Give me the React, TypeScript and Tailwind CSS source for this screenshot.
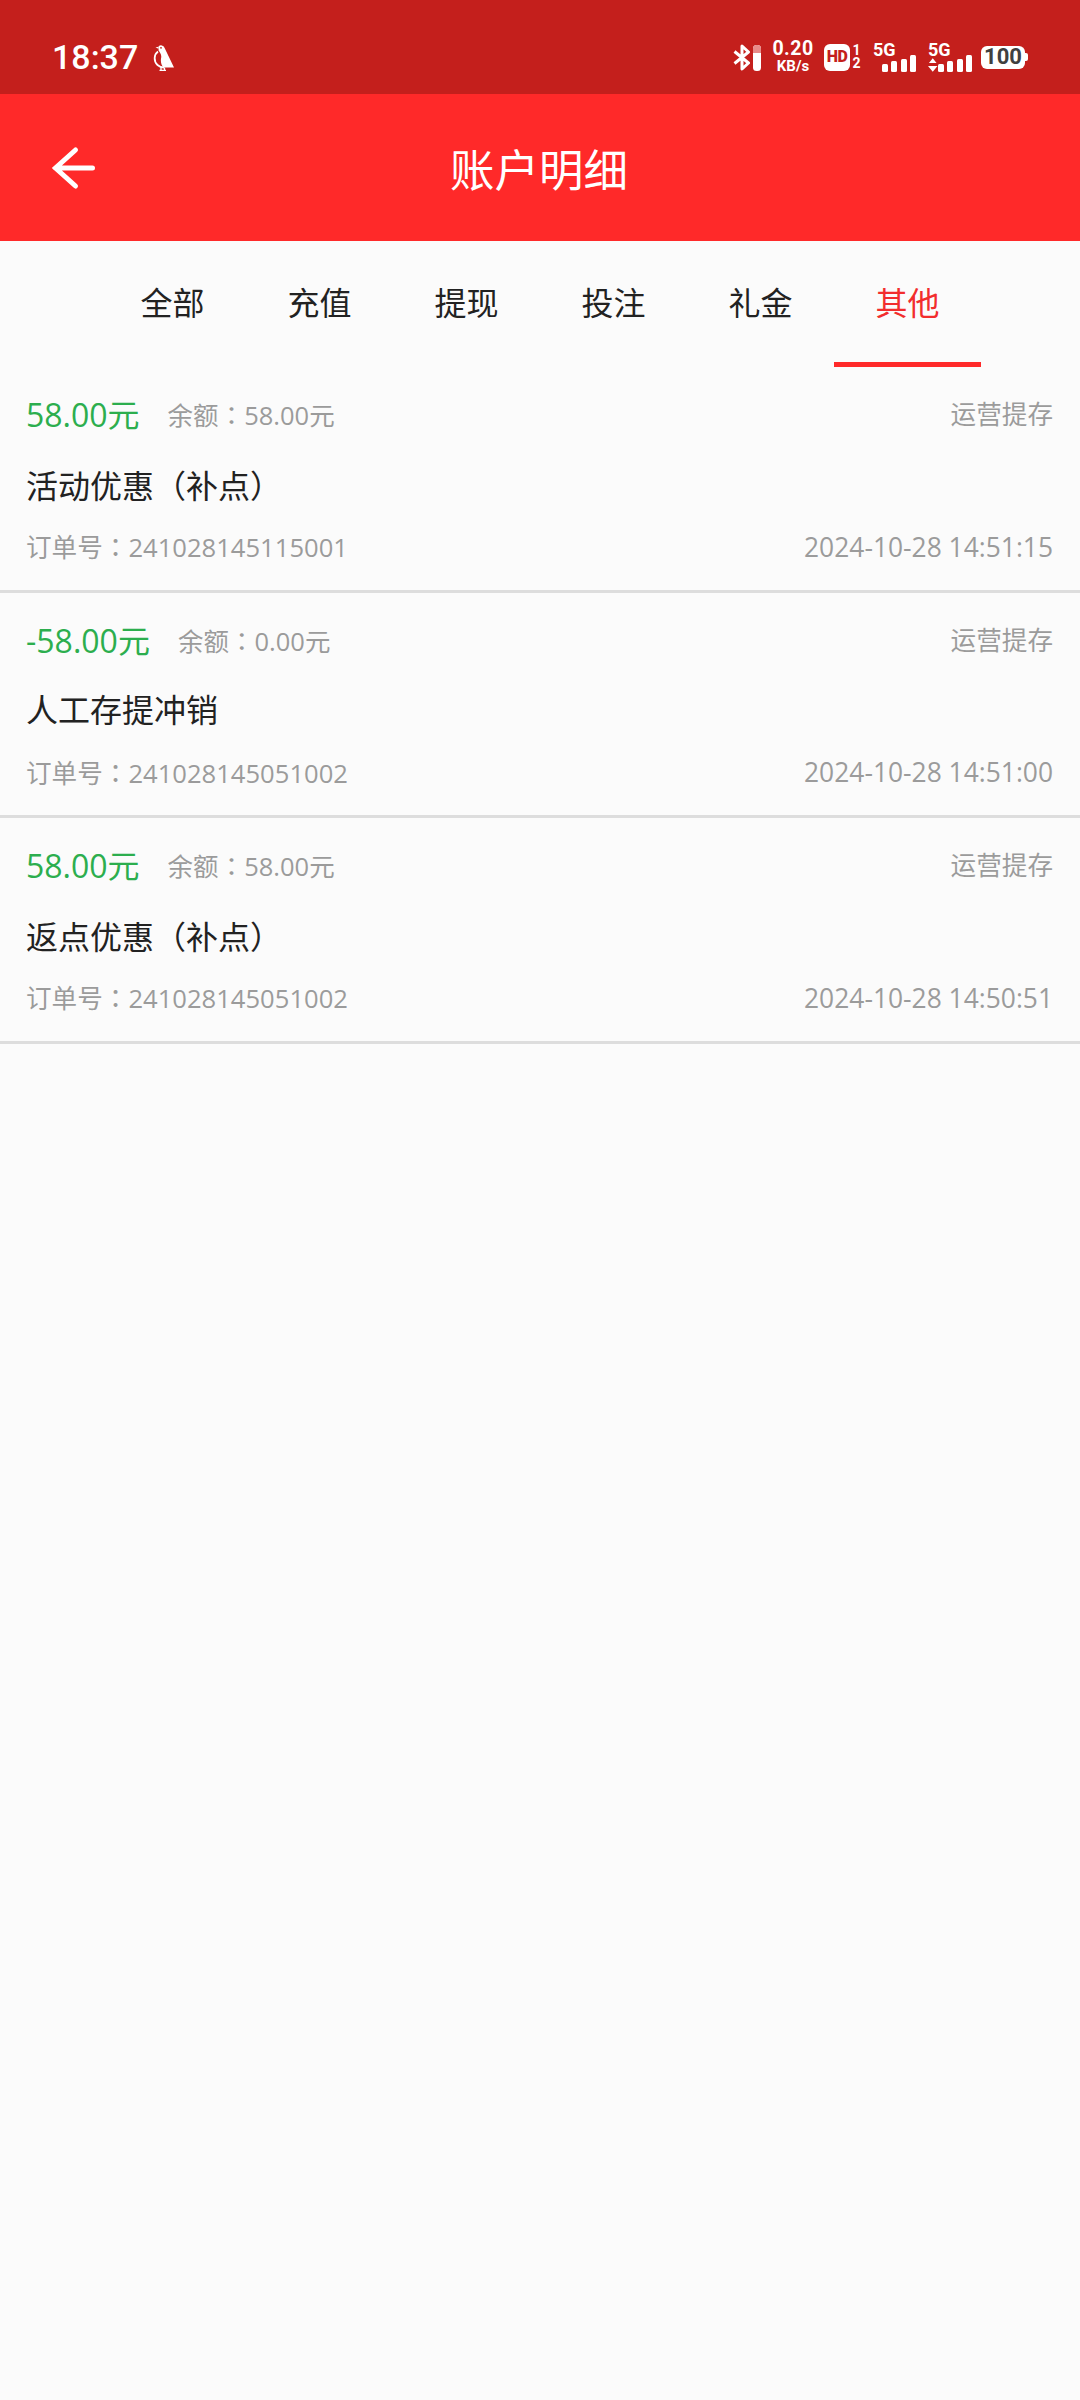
const sans = "font-['Open_Sans','Noto_Sans_CJK_SC',sans-serif]";
const status = "font-['Roboto',sans-serif] font-bold";

const tabs = ["全部", "充值", "提现", "投注", "礼金", "其他"];

const records = [
  { amount: "58.00元", balance: "58.00元", title: "活动优惠", note: "补点", order: "241028145115001", time: "2024-10-28 14:51:15" },
  { amount: "-58.00元", balance: "0.00元", title: "人工存提冲销", note: "", order: "241028145051002", time: "2024-10-28 14:51:00" },
  { amount: "58.00元", balance: "58.00元", title: "返点优惠", note: "补点", order: "241028145051002", time: "2024-10-28 14:50:51" },
];

// the reference draws full-width punctuation centred in its cell, as the TC font does
function Punct({ children }: { children: string }) {
  return <span className="font-['Noto_Sans_CJK_TC',sans-serif]">{children}</span>;
}

function Bird() {
  return (
    <svg width="21" height="27" viewBox="0 0 21 27" fill="white">
      <path d="M5.500 2.500a3.600 3.600 0 0 1 6 1.300L21 23.500H10.500C8.300 21 7.300 17.500 8.200 13.500 8.700 10.500 6.800 8.500 5.600 6.500z" />
      <path d="M2.500 3.500l3-.800v2z" />
      <circle cx="8" cy="3.800" r="0.900" fill="#c41f1c" />
      <path d="M5 7.500C.8 10.500.5 17.500 4.500 21c2 1.800 4 2.500 6.500 2.500" fill="none" stroke="white" strokeWidth="1.800" />
      <path d="M8 23.500v3M11.500 23.500v3M6.500 26.500h6.500" fill="none" stroke="white" strokeWidth="1.300" />
    </svg>
  );
}

function Signal() {
  return (
    <div className="flex items-end gap-[3.500px]">
      <div className="h-[8px] w-[6px] rounded-[1.500px] bg-white" />
      <div className="h-[11px] w-[6px] rounded-[1.500px] bg-white" />
      <div className="h-[13px] w-[6px] rounded-[1.500px] bg-white" />
      <div className="h-[17px] w-[6px] rounded-[1.500px] bg-white" />
    </div>
  );
}

function StatusBar() {
  return (
    <div className="flex h-[94px] items-center justify-between bg-[#c41f1c] pl-[52px] pr-[52px] pt-[20px] text-white">
      <div className="flex items-center gap-[15px]">
        <span className="font-['Roboto',sans-serif] text-[34px] font-medium leading-none">18:37</span>
        <Bird />
      </div>
      <div className="flex items-center">
        {/* bluetooth + headset battery */}
        <svg width="28" height="27" viewBox="0 0 28 27" fill="none">
          <path d="M1.500 7.500l14 11.500-6.500 6V2l6.500 6-14 11.500" stroke="white" strokeWidth="3" strokeLinejoin="round" />
          <rect x="20" y="1" width="8" height="26" rx="3.500" fill="white" />
          <path d="M20 9V4.500A3.500 3.500 0 0 1 23.500 1h1A3.500 3.500 0 0 1 28 4.500V9z" fill="#e88a88" />
        </svg>
        <div className={`${status} ml-[11px] flex w-[42px] flex-col items-center`}>
          <span className="text-[19.500px] leading-[16px] tracking-[0.5px]">0.20</span>
          <span className="mt-[3px] text-[15px] leading-[13px]">KB/s</span>
        </div>
        <div className="ml-[10px] flex h-[27px] w-[26px] items-center justify-center rounded-[6px] bg-white font-['Roboto',sans-serif] text-[16px] font-black leading-none tracking-[-0.5px] text-[#c41f1c]">
          HD
        </div>
        <div className={`${status} ml-[1px] flex w-[11px] flex-col items-center text-[14px] leading-[13px]`}>
          <span>1</span>
          <span>2</span>
        </div>
        <div className={`${status} ml-[11px] flex w-[43px] flex-col`}>
          <span className="h-[13px] text-[18px] leading-[13px]">5G</span>
          <div className="-mt-[1px] flex justify-end">
            <Signal />
          </div>
        </div>
        <div className={`${status} ml-[12px] flex w-[44px] flex-col`}>
          <span className="h-[13px] text-[18px] leading-[13px]">5G</span>
          <div className="-mt-[1px] flex items-end justify-between">
            <svg width="10" height="14" viewBox="0 0 10 14" fill="white">
              <path d="M5 0l4 5H1zM0 8h10l-5 6z" />
            </svg>
            <Signal />
          </div>
        </div>
        <div className="ml-[9px] flex items-center">
          <div className="flex h-[23px] w-[44px] items-center justify-center rounded-[6px] bg-white font-['Roboto',sans-serif] text-[22px] font-bold leading-none text-[#404040]">
            100
          </div>
          <div className="h-[8px] w-[3px] rounded-r-[2px] bg-white" />
        </div>
      </div>
    </div>
  );
}

function Header() {
  return (
    <div className="flex h-[147px] items-center bg-[#ff2929]">
      <div className="w-[148px] pl-[50px]">
        <svg width="48" height="48" viewBox="0 0 48 48" fill="none" stroke="white" strokeWidth="5" strokeLinecap="round">
          <path d="M42.500 24H5.500M25.500 6L5.500 24l20 18" />
        </svg>
      </div>
      <span className="flex-1 pr-[2px] pt-[5px] text-center text-[44.500px] leading-none text-white">账户明细</span>
      <div className="w-[148px]" />
    </div>
  );
}

function Tabs() {
  return (
    <div className="flex h-[126px] justify-center">
      {tabs.map((t) => (
        <div
          key={t}
          className={
            t === "其他"
              ? "flex w-[147px] items-center justify-center border-b-[5px] border-[#ff2929] pt-[2px] text-[#f22d2d]"
              : "flex w-[147px] items-center justify-center border-b-[5px] border-transparent pt-[2px] text-[#222222]"
          }
        >
          <span className="text-[32px] leading-none">{t}</span>
        </div>
      ))}
    </div>
  );
}

function Row({ amount, balance, title, note, order, time }: (typeof records)[number]) {
  return (
    <div className="flex h-[225.500px] flex-col border-b-[3px] border-[#dddddd] pl-[26px] pr-[27px] pt-[30px]">
      <div className="flex h-[36px] items-center justify-between">
        <div className="flex items-center">
          <span className="text-[32px] leading-none text-[#2cae4e]">{amount}</span>
          <span className="ml-[28px] text-[25.500px] leading-none text-[#9b9b9b]">
            余额<Punct>：</Punct>{balance}
          </span>
        </div>
        <span className="text-[25.600px] leading-none text-[#9b9b9b]">运营提存</span>
      </div>
      <div className="mt-[33px] h-[36px] text-[32px] leading-[36px] text-[#222222]">
        {title}
        {note && (
          <>
            <Punct>（</Punct>{note}<Punct>）</Punct>
          </>
        )}
      </div>
      <div className="mt-[28px] flex h-[34px] items-center justify-between leading-none text-[#9b9b9b]">
        <span className="text-[25.600px]">订单号<Punct>：</Punct>{order}</span>
        <span className="text-[26.400px]">{time}</span>
      </div>
    </div>
  );
}

export default function App() {
  return (
    <div className={`${sans} flex h-[2400px] w-[1080px] flex-col bg-[#fbfbfb]`}>
      <StatusBar />
      <Header />
      <Tabs />
      {records.map((r) => (
        <Row key={r.time} {...r} />
      ))}
    </div>
  );
}
